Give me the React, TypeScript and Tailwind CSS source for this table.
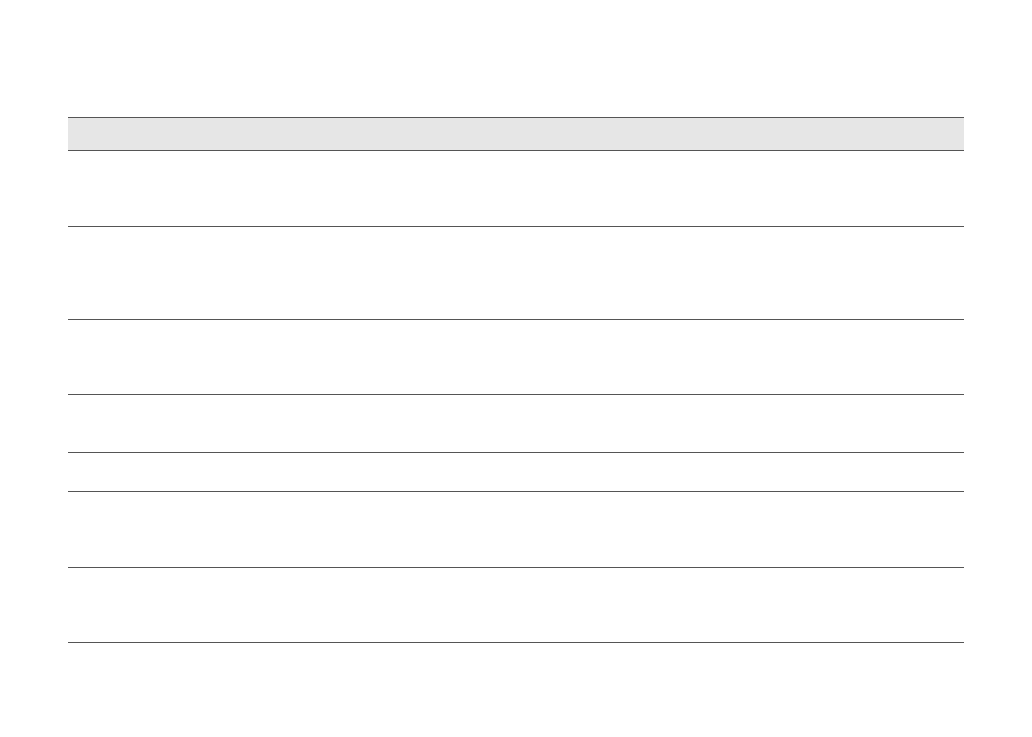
export default function App() {
  return (
    <div className="min-h-[737px] w-full bg-white pt-[117px] pl-[68px] font-['Liberation_Sans',sans-serif]">
      <div className="flex w-[896px] flex-col">
        <div className="h-[34px] border-y border-[#555555] bg-[#e6e6e6]"></div>
        <div className="h-[76px] border-b border-[#555555]"></div>
        <div className="h-[93px] border-b border-[#555555]"></div>
        <div className="h-[75px] border-b border-[#555555]"></div>
        <div className="h-[58px] border-b border-[#555555]"></div>
        <div className="h-[39px] border-b border-[#555555]"></div>
        <div className="h-[76px] border-b border-[#555555]"></div>
        <div className="h-[75px] border-b border-[#555555]"></div>
      </div>
    </div>
  );
}
